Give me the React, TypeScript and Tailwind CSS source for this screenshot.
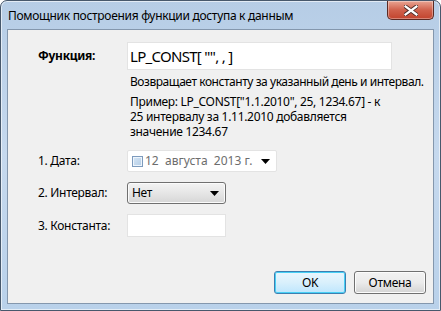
import React from "react";

const font = { fontFamily: '"Noto Sans", "Open Sans", sans-serif' };

function Arrow() {
  return (
    <svg width="9" height="5" viewBox="0 0 9 5" className="shrink-0">
      <path d="M0 0 H9 L4.5 5 Z" fill="#000" />
    </svg>
  );
}

function CloseButton() {
  return (
    <div className="absolute top-0 right-[6px] w-[47px] h-[19px] rounded-b-[5px] border border-t-0 border-[#5b2a23] bg-gradient-to-b from-[#e8a493] via-[#d0614c] to-[#c2432d] shadow-[inset_0_0_0_1px_rgba(255,255,255,0.35)] flex items-center justify-center">
      <svg width="14" height="11" viewBox="0 0 14 11">
        <path
          d="M1.5 1.5 L12.5 9.5 M12.5 1.5 L1.5 9.5"
          stroke="#4a2a26"
          strokeWidth="4"
          strokeLinecap="square"
        />
        <path
          d="M1.5 1.5 L12.5 9.5 M12.5 1.5 L1.5 9.5"
          stroke="#fff"
          strokeWidth="2.2"
          strokeLinecap="square"
        />
      </svg>
    </div>
  );
}

function Label({ children, bold }: { children: React.ReactNode; bold?: boolean }) {
  return (
    <div className={`pl-[30px] whitespace-nowrap ${bold ? "font-bold" : ""}`}>
      {children}
    </div>
  );
}

export default function App() {
  return (
    <div
      style={font}
      className="relative w-[441px] h-[311px] flex flex-col px-[6px] pb-[6px] border border-[#47586c] rounded-t-[7px] bg-gradient-to-b from-[#b6cde6] via-[#c6d9ee] to-[#b9d1ea] shadow-[inset_0_0_0_1px_rgba(255,255,255,0.6)] tracking-[-0.3px]"
    >
      {/* title bar */}
      <div className="h-[28px] shrink-0 flex items-center pt-[2px] pl-[1px] text-[12px] text-black">
        Помощник построения функции доступа к данным
      </div>
      <CloseButton />

      {/* client area */}
      <div className="flex-1 min-h-0 flex flex-col border border-[#8497ad] bg-[#f0f0f0] text-[12px] text-black">
        <div className="grid grid-cols-[119px_1fr] items-center mt-[12px]">
          <Label bold>Функция:</Label>
          <div className="w-[265px] h-[28px] bg-white border border-[#e3e3e3] flex items-center pl-[2px] text-[15px] leading-none tracking-[-0.7px]">
            LP_CONST[ "", , ]
          </div>
        </div>

        <div className="ml-[122px] mt-[4px] leading-[15px] whitespace-nowrap tracking-[-0.45px]">
          Возвращает константу за указанный день и интервал.
        </div>
        <div className="ml-[122px] mt-[5px] flex flex-col leading-[15px] whitespace-nowrap">
          <span>Пример: LP_CONST["1.1.2010", 25, 1234.67] - к</span>
          <span>25 интервалу за 1.11.2010 добавляется</span>
          <span>значение 1234.67</span>
        </div>

        <div className="grid grid-cols-[119px_1fr] items-center mt-[11px]">
          <Label>1. Дата:</Label>
          <div className="w-[150px] h-[22px] bg-white border border-[#e3e3e3] rounded-[2px] flex items-center pl-[4px] pr-[6px]">
            <div className="w-[11px] h-[11px] shrink-0 border border-[#7d9bbd] bg-gradient-to-br from-[#d6e6f5] to-[#b4cde6] shadow-[inset_0_0_0_1px_#eef5fc]" />
            <span className="ml-[2px] text-[#6d6d6d] whitespace-pre tracking-normal">12  августа  2013 г.</span>
            <div className="ml-auto">
              <Arrow />
            </div>
          </div>
        </div>

        <div className="grid grid-cols-[119px_1fr] items-center mt-[10px]">
          <Label>2. Интервал:</Label>
          <div className="w-[99px] h-[22px] rounded-[3px] border border-[#707070] bg-gradient-to-b from-[#f3f3f3] via-[#e6e6e6] to-[#d6d6d6] shadow-[inset_0_0_0_1px_#fbfbfb] flex items-center pl-[4px] pr-[6px]">
            <span>Нет</span>
            <div className="ml-auto">
              <Arrow />
            </div>
          </div>
        </div>

        <div className="grid grid-cols-[119px_1fr] items-center mt-[10px]">
          <Label>3. Константа:</Label>
          <div className="w-[99px] h-[23px] bg-white border border-[#e3e3e3]" />
        </div>

        <div className="mt-auto mb-[9px] mr-[7px] flex justify-end gap-[8px]">
          <button className="w-[72px] h-[23px] rounded-[3px] border border-[#3c7fb1] bg-gradient-to-b from-[#eaf6fd] via-[#d9f0fc] to-[#bee6fd] shadow-[inset_0_0_0_1px_#48d0f5] text-[12px] text-black">
            OK
          </button>
          <button className="w-[72px] h-[23px] rounded-[3px] border border-[#707070] bg-gradient-to-b from-[#f2f2f2] via-[#ebebeb] to-[#d4d4d4] shadow-[inset_0_0_0_1px_#fcfcfc] text-[12px] text-black">
            Отмена
          </button>
        </div>
      </div>
    </div>
  );
}
